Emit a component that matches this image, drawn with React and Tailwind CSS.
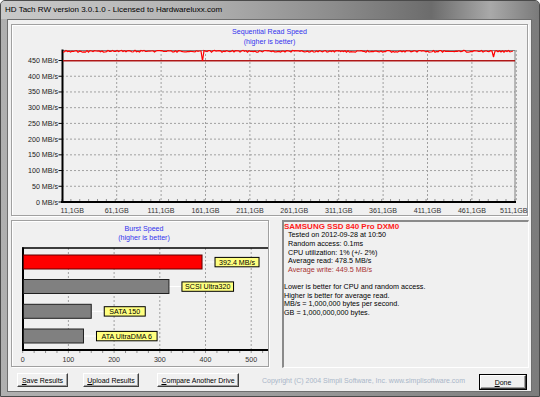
import React from "react"

const rand = (n) => {
  const s = Math.sin(n * 12.9898 + 78.233) * 43758.5453
  return s - Math.floor(s)
}

// read trace of the sequential chart, page coordinates
const readPoints = (() => {
  const pts = []
  for (let x = 63; x <= 514; x += 1.5) {
    let y = 51.3 + (rand(x) - 0.5) * 1.8
    if (x > 200 && x < 204) y = x > 202 && x < 203.6 ? 61 : 51
    if (x > 491 && x < 495) y = x > 492.5 && x < 494.2 ? 57 : 51
    pts.push(`${x.toFixed(1)},${y.toFixed(1)}`)
  }
  return pts.join(" ")
})()

const yVal = (v) => 202 - v * 0.3144
const xTicks = [0, 1, 2, 3, 4, 5, 6, 7, 8, 9, 10]

function SeqChart() {
  return (
    <svg width="516" height="168" viewBox="12 47 516 168" overflow="visible" className="block overflow-visible">
      {[50, 100, 150, 200, 250, 300, 350, 400, 450].map(v => (
        <line key={v} x1="62" x2="515" y1={yVal(v)} y2={yVal(v)} stroke="#a0a0a0" strokeDasharray="2 2" />
      ))}
      {xTicks.slice(1).map(k => (
        <line key={k} x1={72.3 + 44.4 * k} x2={72.3 + 44.4 * k} y1="50" y2="202" stroke="#a0a0a0" strokeDasharray="2 2" />
      ))}
      {Array.from({ length: 52 }).map((_, i) => (
        <line key={i} x1={62 + i * 8.88} x2={62 + i * 8.88} y1="199" y2="201" stroke="#909090" />
      ))}
      <line x1="62" x2="515" y1="50.5" y2="50.5" stroke="#808080" />
      <line x1="515" x2="515" y1="50" y2="202" stroke="#808080" />
      <line x1="62.5" x2="62.5" y1="49.5" y2="203" stroke="#000" strokeWidth="2" />
      <line x1="61" x2="516" y1="202" y2="202" stroke="#000" strokeWidth="2" />
      {[0, 50, 100, 150, 200, 250, 300, 350, 400, 450].map(v => (
        <g key={v}>
          <line x1="58.5" x2="62" y1={yVal(v)} y2={yVal(v)} stroke="#000" />
          <text x="58" y={yVal(v) + 2.5} textAnchor="end" fontSize="7.1" fill="#1a1a1a">
            {v} MB/s
          </text>
        </g>
      ))}
      {xTicks.map(k => (
        <text key={k} x={k === 10 ? 527.5 : 72.3 + 44.4 * k} y="212.6" textAnchor={k === 10 ? "end" : "middle"} fontSize="7.1" fill="#333">
          {11 + 50 * k},1GB
        </text>
      ))}
      <line x1="63" x2="515" y1="60.7" y2="60.7" stroke="#b01818" strokeWidth="1.5" />
      <polyline points={readPoints} fill="none" stroke="#ff0000" strokeWidth="1.2" />
    </svg>
  )
}

const bars = [
  { v: 392.4, y: 255, fill: "#ff0000", edge: "#600000", label: "392.4 MB/s", w: 44 },
  { v: 320, y: 279.5, fill: "#808080", edge: "#202020", label: "SCSI Ultra320", w: 51.6 },
  { v: 150, y: 304.3, fill: "#808080", edge: "#202020", label: "SATA 150", w: 41 },
  { v: 133, y: 329, fill: "#808080", edge: "#202020", label: "ATA UltraDMA 6", w: 60.6 }
]

function BurstChart() {
  const bx = (v) => 22.7 + v * 0.457
  return (
    <svg width="256" height="123" viewBox="12 243 256 123" className="block">
      {[1, 2, 3, 4, 5].map(k => (
        <line key={k} x1={22.7 + 45.7 * k} x2={22.7 + 45.7 * k} y1="248" y2="350" stroke="#a0a0a0" strokeDasharray="2 2" />
      ))}
      {Array.from({ length: 22 }).map((_, i) => (
        <line key={i} x1={22.7 + i * 11.425} x2={22.7 + i * 11.425} y1="351" y2="353" stroke="#909090" />
      ))}
      <line x1="22" x2="268" y1="248" y2="248" stroke="#000" strokeWidth="1.5" />
      <line x1="23" x2="23" y1="247.5" y2="351" stroke="#000" strokeWidth="2" />
      <line x1="22" x2="268" y1="350" y2="350" stroke="#000" strokeWidth="2" />
      {[0, 1, 2, 3, 4, 5].map(k => (
        <text key={k} x={22.7 + 45.7 * k} y="361.6" textAnchor="middle" fontSize="7.1" fill="#333">
          {k * 100}
        </text>
      ))}
      {bars.map(b => {
        const end = bx(b.v)
        const cy = b.y + 7
        return (
          <g key={b.label}>
            <line x1={end} x2={end + 13} y1={cy} y2={cy} stroke="#ffffff" />
            <rect x="23.5" y={b.y} width={end - 23.5} height="14" fill={b.fill} stroke={b.edge} />
            <rect x={end + 13} y={cy - 4.6} width={b.w} height="9.4" fill="#ffff80" stroke="#000" />
            <text x={end + 13 + b.w / 2} y={cy + 2.5} textAnchor="middle" fontSize="7.1" fill="#000">
              {b.label}
            </text>
          </g>
        )
      })}
    </svg>
  )
}

function WinButton({ children, className = "" }) {
  return (
    <button className={`h-[14px] flex items-center justify-center bg-[#f0f0f0] border border-t-white border-l-white border-r-[#404040] border-b-[#404040] shadow-[inset_-1px_-1px_0_#a0a0a0] text-[7px] leading-none text-black ${className}`}>
      {children}
    </button>
  )
}

export default function App() {
  return (
    <div className="w-[540px] h-[397px] flex flex-col bg-[#a2a2a2] border border-[#4a4a4a] rounded-t-[5px] overflow-hidden font-[family-name:Liberation_Sans,Arial,sans-serif]">
      <div className="h-[18px] shrink-0 flex items-center pl-[4px] bg-[linear-gradient(90deg,#c9c9c9_0%,#b4b4b4_35%,#8c8c8c_62%,#6c6c6c_80%,#a9a9a9_91%,#7a7a7a_100%)]">
        <span className="text-[8px] text-black leading-none">
          HD Tach RW version 3.0.1.0 - Licensed to Hardwareluxx.com
        </span>
      </div>

      <div className="flex-1 flex flex-col pl-[6px] pr-[7px] pb-[4px] bg-[linear-gradient(90deg,#b0b0b0_0%,#9d9d9d_50%,#7c7c7c_100%)]">
        <div className="flex-1 flex flex-col bg-[#f0f0f0] border border-[#6e6e6e] pt-[4px]">
          <div className="mx-[3px] h-[192px] shrink-0 flex flex-col border border-[#a0a0a0] shadow-[inset_1px_1px_0_#ffffff,1px_1px_0_#ffffff]">
            <div className="pt-[2px] text-center text-[7.1px] leading-[10px] text-[#3333ee]">
              <div>Sequential Read Speed</div>
              <div>(higher is better)</div>
            </div>
            <SeqChart />
          </div>

          <div className="mt-[4px] flex items-start">
            <div className="ml-[3px] w-[258px] h-[147px] flex flex-col border border-[#a0a0a0] shadow-[inset_1px_1px_0_#ffffff,1px_1px_0_#ffffff] overflow-hidden">
              <div className="pt-[4px] pl-[8px] text-center text-[7.1px] leading-[9px] text-[#3333ee]">
                <div>Burst Speed</div>
                <div>(higher is better)</div>
              </div>
              <BurstChart />
            </div>

            <div className="ml-[13px] w-[247px] h-[148px] border-t-2 border-l-2 border-r border-b border-t-[#8a8a8a] border-l-[#8a8a8a] border-r-white border-b-white text-[7.2px] leading-[8.6px] text-black">
              <div className="text-[8px] leading-[9.4px] font-bold text-[#ff1a1a]">SAMSUNG SSD 840 Pro DXM0</div>
              <div className="pl-[4px]">
                <div>Tested on 2012-09-28 at 10:50</div>
                <div>Random access: 0.1ms</div>
                <div>CPU utilization: 1% (+/- 2%)</div>
                <div>Average read: 478.5 MB/s</div>
                <div className="text-[#a83232]">Average write: 449.5 MB/s</div>
              </div>
              <div className="h-[8.6px]" />
              <div>Lower is better for CPU and random access.</div>
              <div>Higher is better for average read.</div>
              <div>MB/s = 1,000,000 bytes per second.</div>
              <div>GB = 1,000,000,000 bytes.</div>
            </div>
          </div>

          <div className="mt-[5px] flex items-start pl-[9px] pr-[4px]">
            <WinButton className="w-[51px]"><span><span className="underline">S</span>ave Results</span></WinButton>
            <WinButton className="w-[56px] ml-[15px]"><span><span className="underline">U</span>pload Results</span></WinButton>
            <WinButton className="w-[82px] ml-[18px]"><span><span className="underline">C</span>ompare Another Drive</span></WinButton>
            <span className="ml-[23px] mt-[4px] text-[7px] leading-none text-[#a9b6c8] whitespace-nowrap">
              Copyright (C) 2004 Simpli Software, Inc. www.simplisoftware.com
            </span>
            <div className="ml-auto mt-[1px] border border-black">
              <WinButton className="w-[46px] h-[13px]"><span><span className="underline">D</span>one</span></WinButton>
            </div>
          </div>
        </div>
      </div>
    </div>
  )
}
